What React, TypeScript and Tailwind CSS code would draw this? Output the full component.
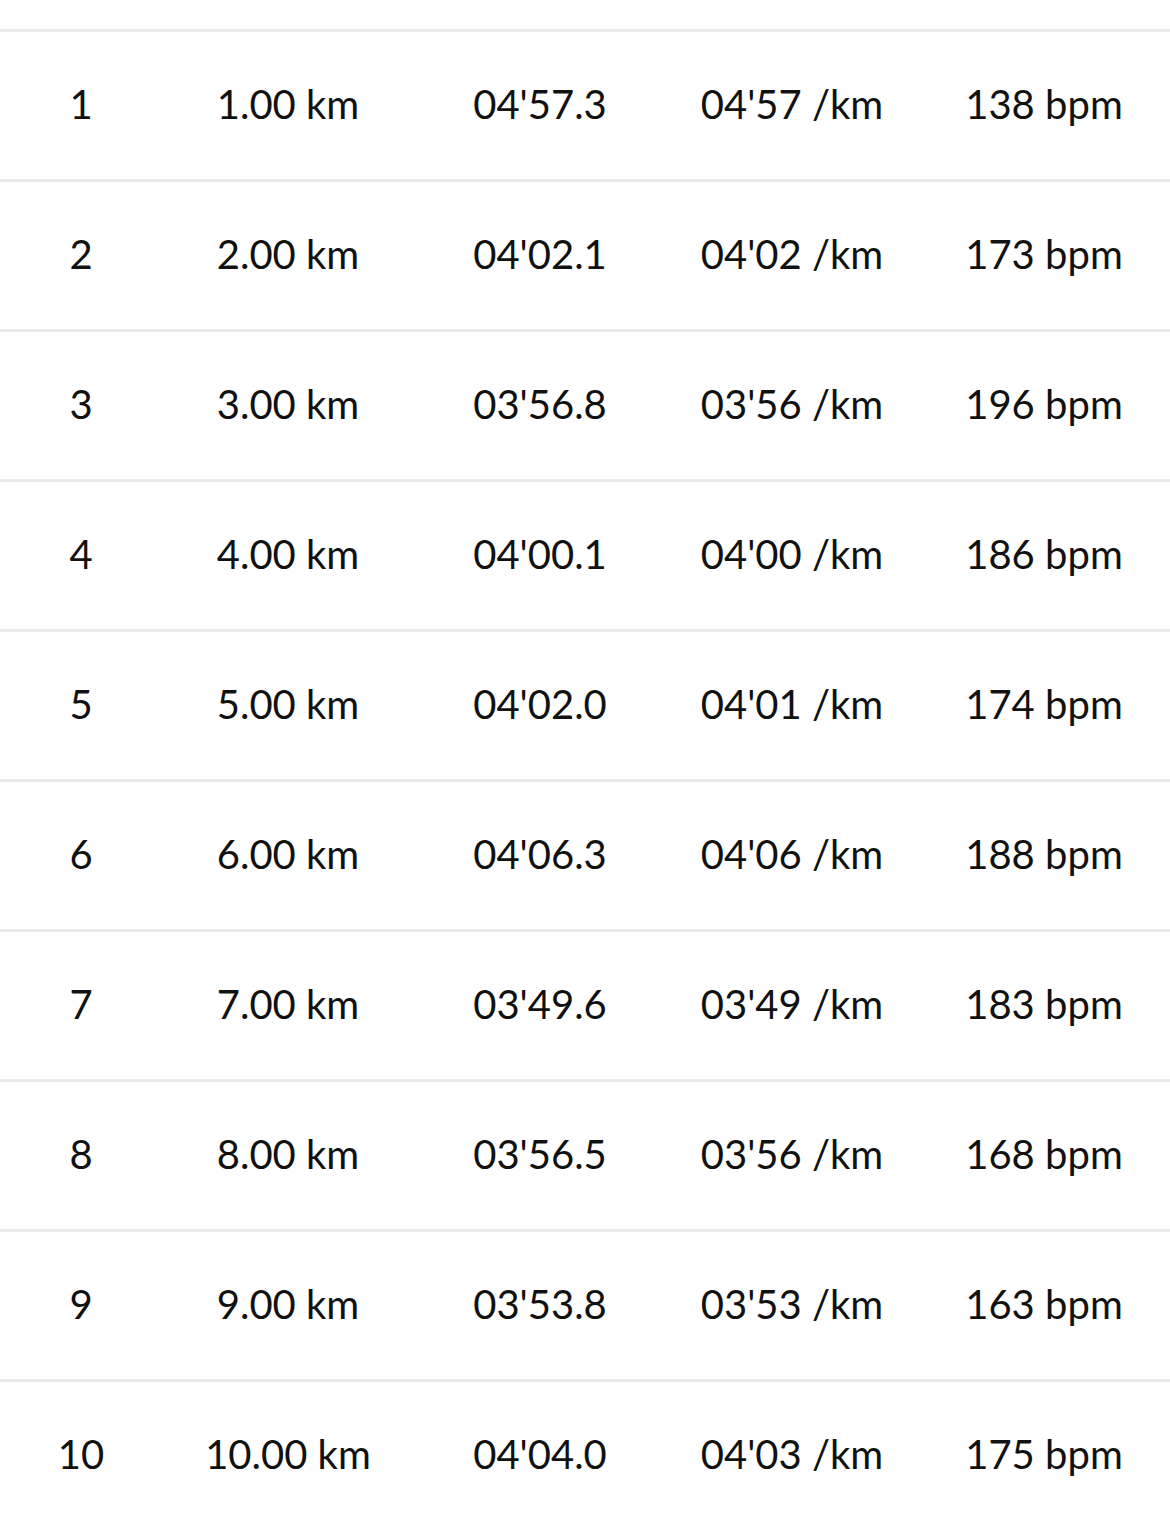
const rows = [
  ["1", "1.00 km", "04'57.3", "04'57 /km", "138 bpm"],
  ["2", "2.00 km", "04'02.1", "04'02 /km", "173 bpm"],
  ["3", "3.00 km", "03'56.8", "03'56 /km", "196 bpm"],
  ["4", "4.00 km", "04'00.1", "04'00 /km", "186 bpm"],
  ["5", "5.00 km", "04'02.0", "04'01 /km", "174 bpm"],
  ["6", "6.00 km", "04'06.3", "04'06 /km", "188 bpm"],
  ["7", "7.00 km", "03'49.6", "03'49 /km", "183 bpm"],
  ["8", "8.00 km", "03'56.5", "03'56 /km", "168 bpm"],
  ["9", "9.00 km", "03'53.8", "03'53 /km", "163 bpm"],
  ["10", "10.00 km", "04'04.0", "04'03 /km", "175 bpm"],
];

export default function App() {
  return (
    <div className="bg-white min-h-screen pt-[29px] text-[#111] text-[40px] font-normal font-['Lato',sans-serif]">
      {rows.map((r) => (
        <div
          key={r[0]}
          className="grid grid-cols-[162px_252px_252px_252px_252px] h-[150px] pb-[3px] items-center border-t-[3px] border-[#e9eaed]"
        >
          {r.map((cell, i) => (
            <span key={i} className="text-center leading-none">
              {cell}
            </span>
          ))}
        </div>
      ))}
    </div>
  );
}
